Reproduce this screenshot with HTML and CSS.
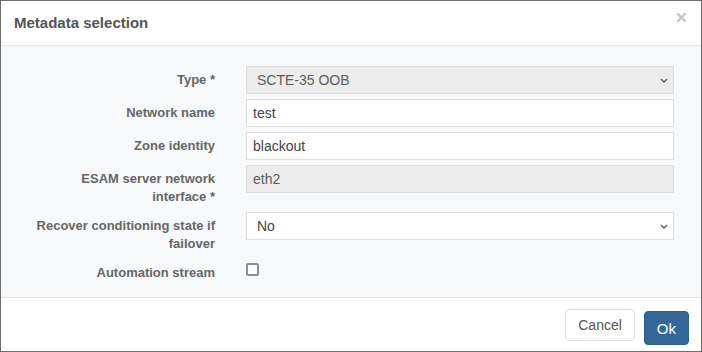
FILE: index.html
```html
<!DOCTYPE html>
<html lang="en">
<head>
  <meta charset="UTF-8" />
  <meta name="viewport" content="width=device-width, initial-scale=1" />
  <title>Metadata selection</title>
  <link rel="stylesheet" href="styles.css">
</head>
<body>

  <div class="modal">
    <div class="modal-header">
      <h4 class="modal-title">Metadata selection</h4>
      <button type="button" class="close" aria-label="Close">
        <svg width="9" height="9" viewBox="0 0 9 9">
          <path d="M1 1 L8 8 M8 1 L1 8" stroke="#c6c6c6" stroke-width="2.4" stroke-linecap="square" />
        </svg>
      </button>
    </div>

    <div class="modal-body">
      <form class="form-horizontal">
        <div class="form-row">
          <label for="type">Type *</label>
          <div class="select-wrap">
            <select id="type" class="form-control" disabled>
              <option>SCTE-35 OOB</option>
            </select>
            <svg class="chevron" width="8" height="5" viewBox="0 0 8 5">
              <path d="M1 1 L4 4 L7 1" fill="none" stroke="#555" stroke-width="1.3" />
            </svg>
          </div>
        </div>

        <div class="form-row">
          <label for="networkName">Network name</label>
          <input type="text" id="networkName" class="form-control" value="test" />
        </div>

        <div class="form-row">
          <label for="zoneIdentity">Zone identity</label>
          <input type="text" id="zoneIdentity" class="form-control" value="blackout" />
        </div>

        <div class="form-row">
          <label for="esamIface">ESAM server network interface *</label>
          <input type="text" id="esamIface" class="form-control" value="eth2" disabled />
        </div>

        <div class="form-row">
          <label for="recover">Recover conditioning state if failover</label>
          <div class="select-wrap">
            <select id="recover" class="form-control">
              <option>No</option>
              <option>Yes</option>
            </select>
            <svg class="chevron" width="8" height="5" viewBox="0 0 8 5">
              <path d="M1 1 L4 4 L7 1" fill="none" stroke="#555" stroke-width="1.3" />
            </svg>
          </div>
        </div>

        <div class="form-row">
          <label for="automation">Automation stream</label>
          <div class="check-wrap">
            <input type="checkbox" id="automation" class="checkbox" />
          </div>
        </div>
      </form>
    </div>

    <div class="modal-footer">
      <button type="button" class="btn btn-default">Cancel</button>
      <button type="button" class="btn btn-primary">Ok</button>
    </div>
  </div>

</body>
</html>
```

FILE: styles.css
```css
* {
  margin: 0;
  padding: 0;
  box-sizing: border-box;
}
body {
  font-family: "Liberation Sans", Arial, sans-serif;
  background: #fff;
  color: #555;
}
.modal {
  width: 702px;
  height: 352px;
  border: 1px solid #6e6e6e;
  background: #fff;
  display: flex;
  flex-direction: column;
}

/* header */
.modal-header {
  height: 45px;
  border-bottom: 1px solid #e5e5e5;
  display: flex;
  justify-content: space-between;
  align-items: flex-start;
  padding: 0 15px 0 13px;
}
.modal-title {
  font-size: 15px;
  font-weight: bold;
  color: #555;
  line-height: 44px;
}
.close {
  border: none;
  background: none;
  margin-top: 12px;
  width: 9px;
  height: 9px;
  cursor: pointer;
}
.close svg {
  display: block;
}

/* body */
.modal-body {
  flex: 1;
  background: #f8f9fb;
  padding: 20px 27px 13px 29px;
}
.form-row {
  display: grid;
  grid-template-columns: 185px 1fr;
  column-gap: 31px;
  margin-bottom: 5px;
}
.form-row:last-child {
  margin-bottom: 0;
}
.form-row label {
  text-align: right;
  font-size: 13px;
  font-weight: bold;
  color: #666;
  line-height: 18px;
  padding: 5px 0 1px;
}
.form-control {
  width: 100%;
  height: 28px;
  border: 1px solid #dedede;
  background: #fff;
  font-family: inherit;
  font-size: 14px;
  color: #444;
  padding: 0 6px;
  outline: none;
  opacity: 1;
}
.form-control:disabled {
  background: #ececec;
  color: #5c5c5c;
  opacity: 1;
}
select.form-control {
  appearance: none;
  -webkit-appearance: none;
  padding-left: 10px;
}
.select-wrap {
  position: relative;
  height: 28px;
}
.chevron {
  position: absolute;
  right: 6px;
  top: 12px;
  pointer-events: none;
}
.check-wrap {
  padding-top: 4px;
}
.checkbox {
  appearance: none;
  -webkit-appearance: none;
  display: block;
  width: 13px;
  height: 13px;
  border: 2px solid #8d8d95;
  border-radius: 2px;
  background: #fff;
}

/* footer */
.modal-footer {
  height: 54px;
  border-top: 1px solid #e5e5e5;
  display: flex;
  justify-content: flex-end;
  align-items: flex-start;
  gap: 9px;
  padding: 11px 12px 0 0;
}
.btn {
  font-family: inherit;
  border-radius: 4px;
  padding: 0 12px;
  cursor: pointer;
}
.btn-default {
  height: 32px;
  font-size: 14px;
  background: #fff;
  border: 1px solid #e0e0e0;
  color: #555;
}
.btn-primary {
  height: 34px;
  margin-top: 2px;
  font-size: 15px;
  background: #336699;
  border: 1px solid #2e5f8f;
  color: #fff;
}
```
